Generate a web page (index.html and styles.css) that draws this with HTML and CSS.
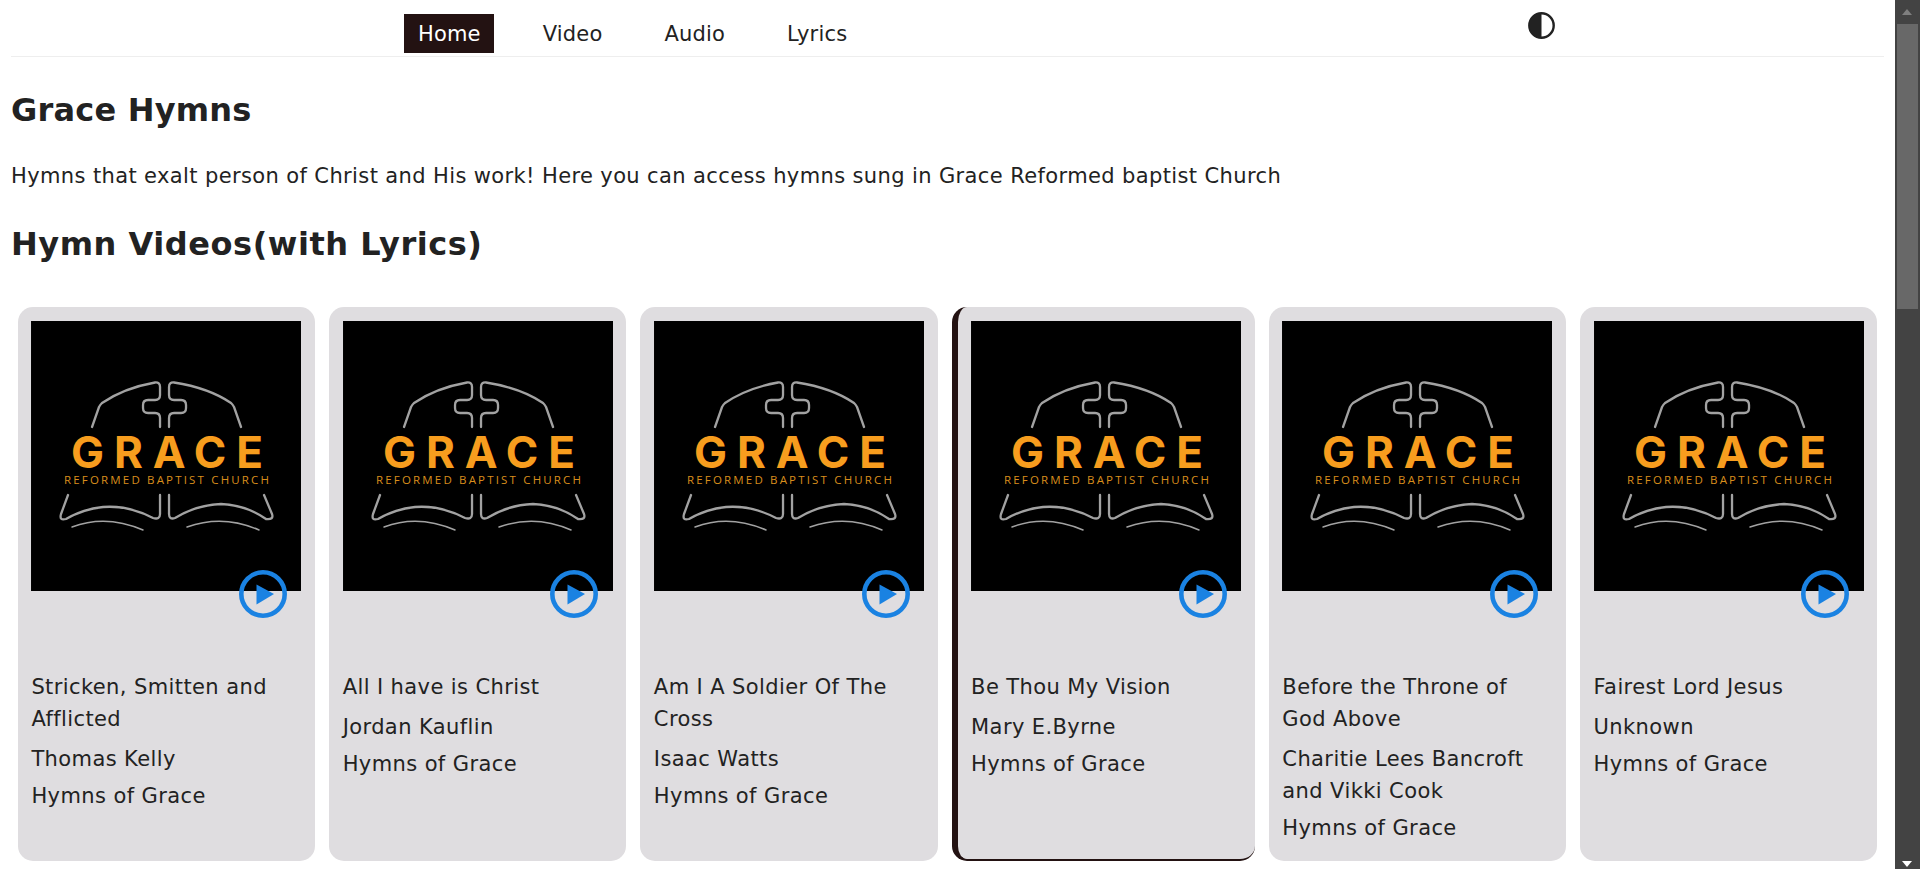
FILE: index.html
```html
<!DOCTYPE html>
<html lang="en">
<head>
    <meta charset="UTF-8">
    <meta name="viewport" content="width=device-width, initial-scale=1.0">
    <title>Grace Hymns</title>
    <link rel="stylesheet" href="styles.css">
</head>
<body>
    <svg class="defs" width="0" height="0">
        <symbol id="logo" viewBox="0 0 270 270">
            <rect width="270" height="270" fill="#000"/>
            <g fill="none" stroke="#a2a2a2" stroke-width="2.3" stroke-linecap="round" stroke-linejoin="round">
                <path d="M61 106 L68 86 Q69 84 71 82 Q93 67 124 61.5 Q129 61 129 66 L129 74 Q129 79 124 79 L117 79 Q112 79 112 84 L112 87 Q112 92 117 92 L124 92 Q129 92 129 97 L129 106"/>
                <path d="M210 106 L203 86 Q202 84 200 82 Q178 67 143 61.5 Q138 61 138 66 L138 74 Q138 79 143 79 L150 79 Q155 79 155 84 L155 87 Q155 92 150 92 L143 92 Q138 92 138 97 L138 106"/>
                <path d="M37 174 L30 193 Q28 200 35 198 Q52 188 72 186 Q97 184 122 197 Q129 199 129 193 L129 174"/>
                <path d="M138 174 L138 193 Q138 199 144 197 Q165 184 190 183 Q215 184 235 198 Q243 199 241 193 L233 174"/>
                <path d="M41 206 Q75 193 112 209" stroke-width="1.5"/>
                <path d="M156 206 Q192 193 228 209" stroke-width="1.5"/>
            </g>
        </symbol>
        <symbol id="play" viewBox="0 0 48 48">
            <circle cx="24" cy="24" r="21.7" fill="none" stroke="#1a82e2" stroke-width="4.6"/>
            <path d="M17.5 14.5 L35 24 L17.5 34.5 Z" fill="#1a82e2"/>
        </symbol>
    </svg>

    <div class="page">
        <nav class="topnav">
            <ul class="menu">
                <li class="active">Home</li>
                <li>Video</li>
                <li>Audio</li>
                <li>Lyrics</li>
            </ul>
            <svg class="theme" viewBox="0 0 27 27" width="27" height="27">
                <circle cx="13.5" cy="13.5" r="12.2" fill="#fff" stroke="#222" stroke-width="2.4"/>
                <path d="M13.5 1.3 A12.2 12.2 0 0 0 13.5 25.7 Z" fill="#222"/>
            </svg>
        </nav>

        <h1>Grace Hymns</h1>
        <p class="intro">Hymns that exalt person of Christ and His work! Here you can access hymns sung in Grace Reformed baptist Church</p>
        <h2>Hymn Videos(with Lyrics)</h2>

        <div class="cards">
            <div class="card">
                <div class="thumb">
                    <svg class="logo" viewBox="0 0 270 270">
                        <use href="#logo"/>
                        <text class="logo-big" x="40" y="147" textLength="192">GRACE</text>
                        <text class="logo-small" x="33" y="163" textLength="205">REFORMED BAPTIST CHURCH</text>
                    </svg>
                    <svg class="play"><use href="#play"/></svg>
                </div>
                <p class="title">Stricken, Smitten and Afflicted</p>
                <p class="author">Thomas Kelly</p>
                <p class="album">Hymns of Grace</p>
            </div>
            <div class="card">
                <div class="thumb">
                    <svg class="logo" viewBox="0 0 270 270">
                        <use href="#logo"/>
                        <text class="logo-big" x="40" y="147" textLength="192">GRACE</text>
                        <text class="logo-small" x="33" y="163" textLength="205">REFORMED BAPTIST CHURCH</text>
                    </svg>
                    <svg class="play"><use href="#play"/></svg>
                </div>
                <p class="title">All I have is Christ</p>
                <p class="author">Jordan Kauflin</p>
                <p class="album">Hymns of Grace</p>
            </div>
            <div class="card">
                <div class="thumb">
                    <svg class="logo" viewBox="0 0 270 270">
                        <use href="#logo"/>
                        <text class="logo-big" x="40" y="147" textLength="192">GRACE</text>
                        <text class="logo-small" x="33" y="163" textLength="205">REFORMED BAPTIST CHURCH</text>
                    </svg>
                    <svg class="play"><use href="#play"/></svg>
                </div>
                <p class="title">Am I A Soldier Of The Cross</p>
                <p class="author">Isaac Watts</p>
                <p class="album">Hymns of Grace</p>
            </div>
            <div class="card hovered">
                <div class="thumb">
                    <svg class="logo" viewBox="0 0 270 270">
                        <use href="#logo"/>
                        <text class="logo-big" x="40" y="147" textLength="192">GRACE</text>
                        <text class="logo-small" x="33" y="163" textLength="205">REFORMED BAPTIST CHURCH</text>
                    </svg>
                    <svg class="play"><use href="#play"/></svg>
                </div>
                <p class="title">Be Thou My Vision</p>
                <p class="author">Mary E.Byrne</p>
                <p class="album">Hymns of Grace</p>
            </div>
            <div class="card">
                <div class="thumb">
                    <svg class="logo" viewBox="0 0 270 270">
                        <use href="#logo"/>
                        <text class="logo-big" x="40" y="147" textLength="192">GRACE</text>
                        <text class="logo-small" x="33" y="163" textLength="205">REFORMED BAPTIST CHURCH</text>
                    </svg>
                    <svg class="play"><use href="#play"/></svg>
                </div>
                <p class="title">Before the Throne of God Above</p>
                <p class="author">Charitie Lees Bancroft and Vikki Cook</p>
                <p class="album">Hymns of Grace</p>
            </div>
            <div class="card">
                <div class="thumb">
                    <svg class="logo" viewBox="0 0 270 270">
                        <use href="#logo"/>
                        <text class="logo-big" x="40" y="147" textLength="192">GRACE</text>
                        <text class="logo-small" x="33" y="163" textLength="205">REFORMED BAPTIST CHURCH</text>
                    </svg>
                    <svg class="play"><use href="#play"/></svg>
                </div>
                <p class="title">Fairest Lord Jesus</p>
                <p class="author">Unknown</p>
                <p class="album">Hymns of Grace</p>
            </div>
        </div>
    </div>

    <div class="scrollbar">
        <div class="arrow-up"></div>
        <div class="thumb-bar"></div>
        <div class="arrow-down"></div>
    </div>
</body>
</html>
```

FILE: styles.css
```css
*{
    margin:0px;
    padding:0px;
    box-sizing:border-box;
}
html,body{
    height:869px;
    overflow:hidden;
}
body{
    display:flex;
    background-color:#fff;
    color:#222;
    font-family:"DejaVu Sans",Verdana,sans-serif;
}
.defs{
    position:absolute;
}
.page{
    flex:1;
    min-width:0;
    padding:0px 11px;
}

/* top nav */
.topnav{
    display:flex;
    height:57px;
    padding-left:393.4px;
    border-bottom:1px solid #eee;
}
.menu{
    display:flex;
    gap:34.8px;
    list-style:none;
    margin-top:14px;
    height:39px;
    font-size:21px;
    letter-spacing:0.18px;
}
.menu li{
    padding:0px 13.6px;
    line-height:40px;
}
.menu .active{
    background-color:#231212;
    color:#fff;
}
.theme{
    margin-left:667px;
    margin-top:12px;
}

h1{
    font-size:32px;
    letter-spacing:0.2px;
    line-height:40px;
    margin-top:33px;
}
.intro{
    font-size:21px;
    letter-spacing:0.38px;
    line-height:32px;
    margin-top:30px;
}
h2{
    font-size:32px;
    letter-spacing:0.54px;
    line-height:40px;
    margin-top:32px;
}

/* cards */
.cards{
    display:flex;
    gap:14px;
    padding:0px 6.8px;
    margin-top:43px;
}
.card{
    flex:1 1 0;
    height:554px;
    padding:14px 13.6px;
    background-color:#dfdde0;
    border-radius:15px;
    font-size:21px;
    letter-spacing:0.4px;
}
.card.hovered{
    border-left:6px solid #231212;
    border-bottom:2px solid #231212;
}
.thumb{
    position:relative;
    height:270px;
    margin-bottom:80px;
}
.logo{
    display:block;
    width:100%;
    height:270px;
}
.play{
    position:absolute;
    right:14.4px;
    bottom:-27px;
    width:48px;
    height:48px;
}
.card p{
    line-height:32px;
}
.title{
    margin-bottom:8px;
}
.author{
    margin-bottom:5px;
}

/* logo text */
.logo-big{
    font-family:"Inter",sans-serif;
    font-weight:700;
    font-size:44px;
    letter-spacing:0px;
    fill:#f79d1e;
}
.logo-small{
    font-family:"Open Sans",sans-serif;
    font-size:11.5px;
    letter-spacing:0px;
    fill:#d98e1c;
}

/* drawn scrollbar, the screenshot shows one */
.scrollbar{
    width:25px;
    flex:none;
    position:relative;
    background-color:#434343;
}
.thumb-bar{
    position:absolute;
    left:2px;
    top:24px;
    width:21px;
    height:285px;
    background-color:#686868;
}
.arrow-up,.arrow-down{
    position:absolute;
    left:7px;
    width:0px;
    height:0px;
    border-left:5.5px solid transparent;
    border-right:5.5px solid transparent;
}
.arrow-up{
    top:9px;
    border-bottom:6px solid #7f7f7f;
}
.arrow-down{
    top:861px;
    border-top:6px solid #fff;
}
```
